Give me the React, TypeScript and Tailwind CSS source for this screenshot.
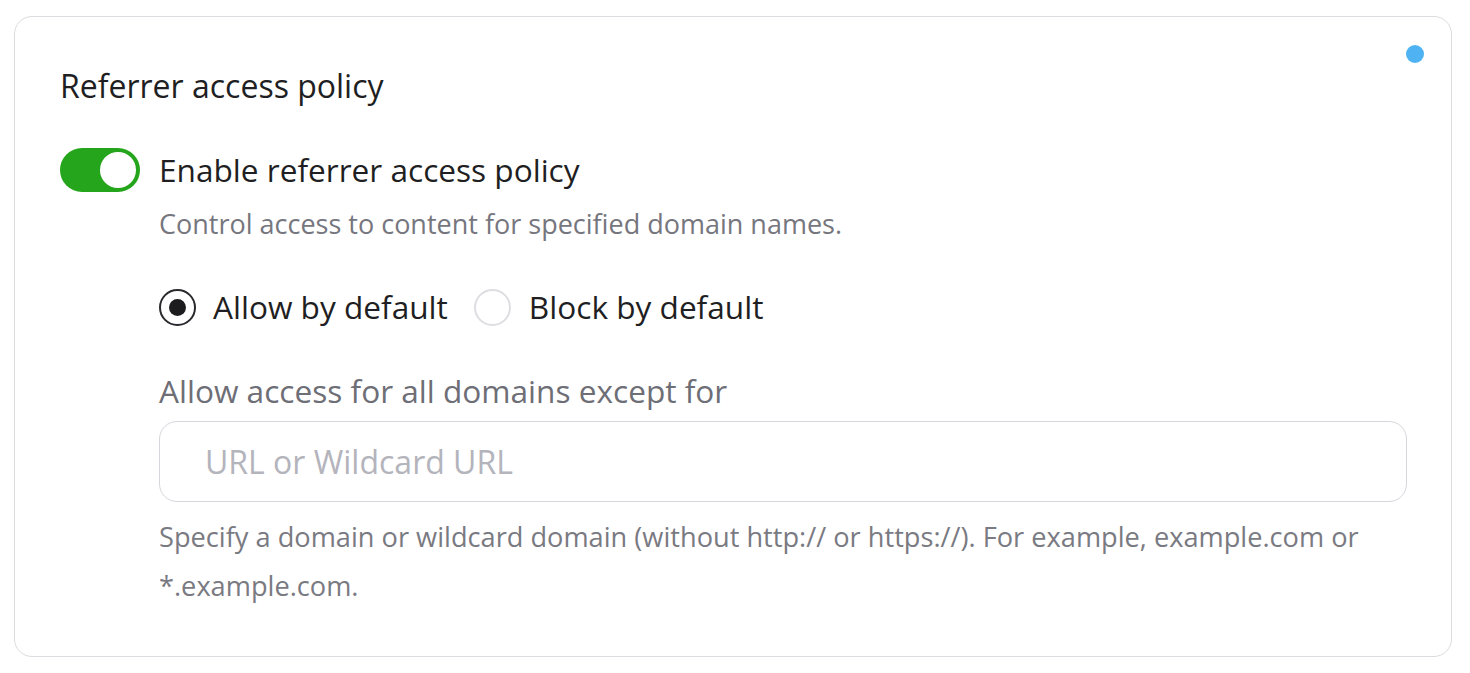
export default function App() {
  return (
    <div className="min-h-screen bg-white pl-[14px] pr-[18px] pt-[16px] font-['Open_Sans',sans-serif]">
      <div className="relative h-[641px] rounded-[18px] border border-[#dcdce0] bg-white pl-[45px] pt-[50px]">
        <span className="absolute right-[27px] top-[28px] h-[18px] w-[18px] rounded-full bg-[#4fb3f3]" />
        <h2 className="text-[32px] leading-[38px] text-[#1f1f23]">Referrer access policy</h2>

        <div className="mt-[43px] flex items-center gap-[19px]">
          <button className="flex h-[44px] w-[80px] items-center justify-end rounded-full bg-[#25a51b] pr-[4px]">
            <span className="h-[36px] w-[36px] rounded-full bg-white" />
          </button>
          <span className="text-[31.6px] leading-[40px] text-[#1f1f23]">Enable referrer access policy</span>
        </div>

        <div className="pl-[99px]">
          <p className="mt-[15px] text-[27px] leading-[34px] text-[#76767e]">
            Control access to content for specified domain names.
          </p>

          <div className="mt-[46px] flex items-center">
            <label className="flex items-center gap-[17px]">
              <span className="flex h-[37px] w-[37px] items-center justify-center rounded-full border-2 border-[#2a2a2e]">
                <span className="h-[17px] w-[17px] rounded-full bg-[#1c1c1f]" />
              </span>
              <span className="text-[31.6px] leading-[40px] text-[#1f1f23]">Allow by default</span>
            </label>
            <label className="ml-[26px] flex items-center gap-[18px]">
              <span className="h-[37px] w-[37px] rounded-full border-2 border-[#dedee2]" />
              <span className="text-[31.6px] leading-[40px] text-[#1f1f23]">Block by default</span>
            </label>
          </div>

          <p className="mt-[44px] text-[31.6px] leading-[40px] text-[#6e6e76]">
            Allow access for all domains except for
          </p>

          <div className="mt-[10px] mr-[44px] flex h-[81px] items-center rounded-[18px] border border-[#d6d6dc] px-[45px]">
            <span className="text-[32px] text-[#b4b4bc]">URL or Wildcard URL</span>
          </div>

          <p className="mt-[10px] mr-[40px] text-[27.2px] leading-[49px] text-[#7a7a82]">
            Specify a domain or wildcard domain (without http:// or https://). For example, example.com or *.example.com.
          </p>
        </div>
      </div>
    </div>
  );
}
